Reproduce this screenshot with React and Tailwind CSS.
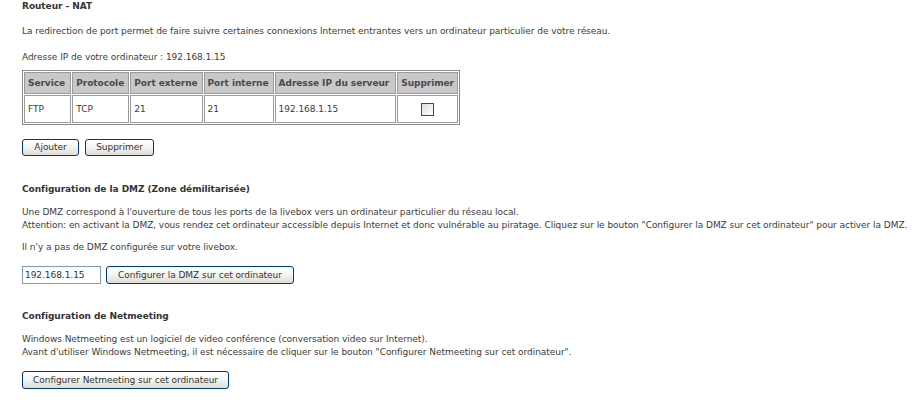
import React from 'react';

const font = { fontFamily: '"DejaVu Sans", Verdana, sans-serif' };

const cols = [
    { label: 'Service', w: 'w-[49px]', value: 'FTP' },
    { label: 'Protocole', w: 'w-[58px]', value: 'TCP' },
    { label: 'Port externe', w: 'w-[73px]', value: '21' },
    { label: 'Port interne', w: 'w-[71px]', value: '21' },
    { label: 'Adresse IP du serveur', w: 'w-[124px]', value: '192.168.1.15' },
];

function XpButton({ children, className = '' }) {
    return (
        <button
            className={`h-[17px] whitespace-nowrap rounded-[3px] border border-[#003c74] bg-gradient-to-b from-white via-[#f4f4f0] to-[#dcdcd4] px-0 text-[9px] leading-none text-[#333] ${className}`}
            style={font}
        >
            {children}
        </button>
    );
}

export default function App() {
    return (
        <div className="min-h-[410px] bg-white pl-[22px] pr-[4px] pt-[1px] text-[9px] leading-[13px] tracking-[-0.05px] text-[#3c3c3c]" style={font}>
            <h3 className="font-bold leading-[11px] text-[#333]">Routeur - NAT</h3>

            <p className="mt-[13px]">
                La redirection de port permet de faire suivre certaines connexions Internet entrantes vers un ordinateur particulier de votre réseau.
            </p>
            <p className="mt-[13px]">Adresse IP de votre ordinateur : 192.168.1.15</p>

            <table className="mt-[6px] w-[438px] border-separate border-spacing-[1px] border border-[#8a8a8a]">
                <thead>
                    <tr>
                        {cols.map((c) => (
                            <th
                                key={c.label}
                                className={`${c.w} h-[22px] border border-[#9a9a9a] bg-[#c8c8c8] px-[3px] text-left font-bold whitespace-nowrap text-[#4a4a4a]`}
                            >
                                {c.label}
                            </th>
                        ))}
                        <th className="h-[22px] border border-[#9a9a9a] bg-[#c8c8c8] px-[3px] text-left font-bold text-[#4a4a4a]">
                            Supprimer
                        </th>
                    </tr>
                </thead>
                <tbody>
                    <tr>
                        {cols.map((c) => (
                            <td key={c.label} className="h-[28px] border border-[#9a9a9a] px-[3px]">
                                {c.value}
                            </td>
                        ))}
                        <td className="border border-[#9a9a9a] text-center">
                            <span className="inline-block h-[13px] w-[13px] border border-[#1c5180] bg-gradient-to-br from-[#dcdcd7] to-white align-middle" />
                        </td>
                    </tr>
                </tbody>
            </table>

            <div className="mt-[14px] flex gap-[6px]">
                <XpButton className="w-[57px]">Ajouter</XpButton>
                <XpButton className="w-[69px]">Supprimer</XpButton>
            </div>

            <h3 className="mt-[27px] font-bold text-[#333]">Configuration de la DMZ (Zone démilitarisée)</h3>

            <p className="mt-[10px] whitespace-nowrap">
                Une DMZ correspond à l'ouverture de tous les ports de la livebox vers un ordinateur particulier du réseau local.
                <br />
                Attention: en activant la DMZ, vous rendez cet ordinateur accessible depuis Internet et donc vulnérable au piratage. Cliquez sur le bouton "Configurer la DMZ sur cet ordinateur" pour activer la DMZ.
            </p>
            <p className="mt-[9px]">Il n'y a pas de DMZ configurée sur votre livebox.</p>

            <div className="mt-[12px] flex items-center gap-[5px]">
                <input
                    defaultValue="192.168.1.15"
                    className="h-[18px] w-[79px] border border-[#7f9db9] px-[2px] text-[9px] text-[#333] outline-none"
                    style={font}
                />
                <XpButton className="h-[18px] w-[188px]">Configurer la DMZ sur cet ordinateur</XpButton>
            </div>

            <h3 className="mt-[26px] font-bold text-[#333]">Configuration de Netmeeting</h3>

            <p className="mt-[10px]">
                Windows Netmeeting est un logiciel de video conférence (conversation video sur Internet).
                <br />
                Avant d'utiliser Windows Netmeeting, il est nécessaire de cliquer sur le bouton "Configurer Netmeeting sur cet ordinateur".
            </p>

            <div className="mt-[12px]">
                <XpButton className="h-[18px] w-[207px]">Configurer Netmeeting sur cet ordinateur</XpButton>
            </div>
        </div>
    );
}
